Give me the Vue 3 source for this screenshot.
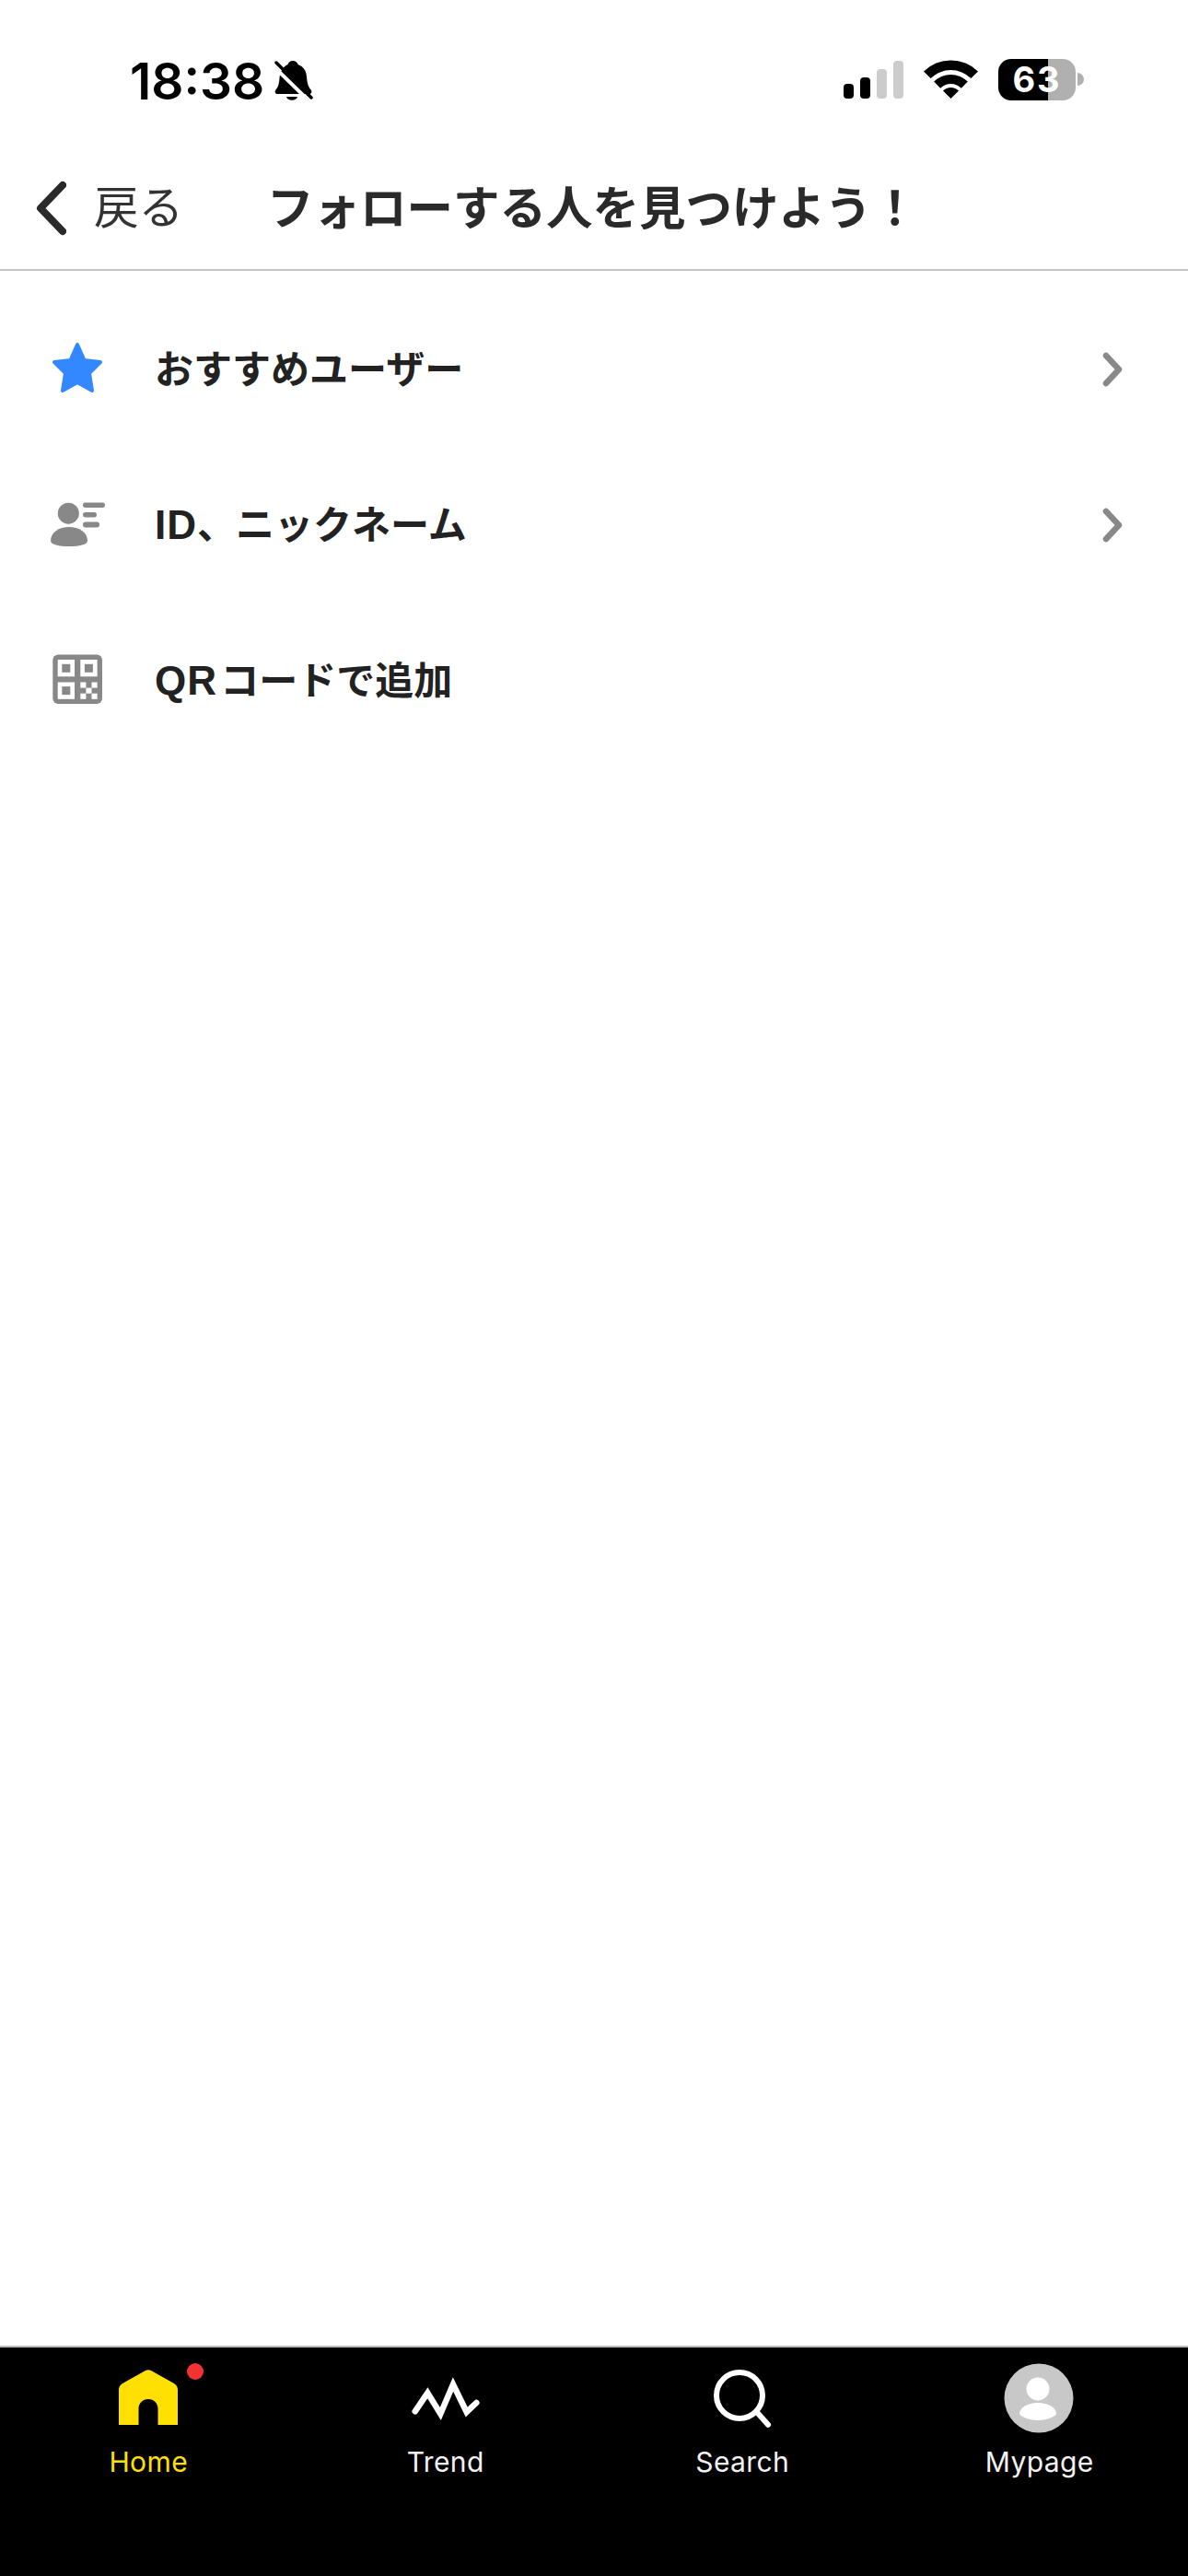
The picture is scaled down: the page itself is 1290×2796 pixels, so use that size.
<script setup>
const tabs = [
  { key: 'home', label: 'Home', active: true },
  { key: 'trend', label: 'Trend' },
  { key: 'search', label: 'Search' },
  { key: 'mypage', label: 'Mypage' }
];

const rows = [
  { key: 'star', latin: '', label: 'おすすめユーザー', arrow: true },
  { key: 'person', latin: 'ID', label: '、ニックネーム', arrow: true },
  { key: 'qr', latin: 'QR', label: ' コードで追加', arrow: false }
];

// QRの右下の市松模様
const checker = [
  [0, 0], [2, 0], [1, 1], [0, 2], [2, 2]
];
</script>

<template>
  <div class="screen">
    <div class="status-bar">
      <div class="status-left">
        <span class="time">18:38</span>
        <svg class="bell" width="42" height="46" viewBox="0 0 42 46">
          <path d="M20 1c3 0 5 2 5.500 4 6 2 9 7 9.500 13 .5 7 1.500 11 5 15 1 2 0 4-2 4H3c-2 0-3-2-2-4 3-3 4-7 4.500-13 .5-7 4-13 9-15C15 3 17 1 20 1z" fill="#000" />
          <path d="M13 40h12c-1 5-11 5-12 0z" fill="#000" />
          <path d="M-2 6 38 45" stroke="#fff" stroke-width="4" />
          <path d="M2 3 40 41" stroke="#000" stroke-width="3.500" stroke-linecap="round" />
        </svg>
      </div>
      <div class="status-right">
        <div class="signal">
          <i class="bar on b1"></i>
          <i class="bar on b2"></i>
          <i class="bar b3"></i>
          <i class="bar b4"></i>
        </div>
        <svg class="wifi" width="59" height="42" viewBox="0 0 59 42">
          <path d="M0 12.500A42 42 0 0 1 59 12.500L51.400 20.100A31 31 0 0 0 7.600 20.100z" fill="#000" />
          <path d="M11.100 23.600A26 26 0 0 1 47.900 23.600L40.800 30.700A16 16 0 0 0 18.200 30.700z" fill="#000" />
          <path d="M21 33.500A12 12 0 0 1 38 33.500L29.500 42z" fill="#000" />
        </svg>
        <div class="battery">63</div>
        <div class="battery-cap"></div>
      </div>
    </div>

    <header class="nav">
      <div class="back">
        <svg width="35" height="60" viewBox="0 0 35 60">
          <path d="M31 5 7 30l24 25" fill="none" stroke="#2a2a2a" stroke-width="8" stroke-linecap="round" stroke-linejoin="round" />
        </svg>
        <span>戻る</span>
      </div>
      <h1>フォローする人を見つけよう！</h1>
    </header>

    <ul class="menu">
      <li v-for="row in rows" :key="row.key" class="menu-row">
        <svg v-if="row.key === 'star'" class="menu-icon" width="57" height="57" viewBox="0 0 57 57">
          <path d="M29 2 36.500 19 54 21 42 33 45 52 29 43 13 52 16 33 4 21 21.500 19z" fill="#3388ff" stroke="#3388ff" stroke-width="4" stroke-linejoin="round" />
        </svg>
        <svg v-else-if="row.key === 'person'" class="menu-icon" width="57" height="57" viewBox="0 0 57 57">
          <circle cx="19.300" cy="16.200" r="11.500" fill="#888" />
          <path d="M0 46C0 37 9 31 20 31s20 6 20 15c0 4-9 6-20 6S0 50 0 46z" fill="#888" />
          <rect x="35" y="4.500" width="24" height="5.500" rx="2.750" fill="#888" />
          <rect x="35" y="15" width="15" height="5.500" rx="2.750" fill="#888" />
          <rect x="35" y="25.500" width="18" height="6" rx="3" fill="#888" />
        </svg>
        <svg v-else class="menu-icon" width="57" height="57" viewBox="0 0 57 57">
          <rect x="2.300" y="0.500" width="53.700" height="53.500" rx="6" fill="#888" />
          <rect x="7.700" y="6" width="18.300" height="18.300" fill="#fff" />
          <rect x="32.300" y="6" width="18.300" height="18.300" fill="#fff" />
          <rect x="7.700" y="30.500" width="18.300" height="18.300" fill="#fff" />
          <rect x="12.300" y="10.800" width="9" height="9" fill="#888" />
          <rect x="36.900" y="10.800" width="9" height="9" fill="#888" />
          <rect x="12.300" y="35.100" width="9" height="9" fill="#888" />
          <rect
            v-for="c in checker"
            :key="c.join('-')"
            :x="32.300 + c[0] * 6.100"
            :y="30.500 + c[1] * 6.100"
            width="6.100"
            height="6.100"
            fill="#fff"
          />
        </svg>
        <span class="menu-label"><span class="latin">{{ row.latin }}</span>{{ row.label }}</span>
        <svg v-if="row.arrow" class="arrow" width="22" height="38" viewBox="0 0 22 38">
          <path d="M4 4 18 19 4 34" fill="none" stroke="#888" stroke-width="6.500" stroke-linecap="round" stroke-linejoin="round" />
        </svg>
      </li>
    </ul>

    <nav class="tabbar">
      <div v-for="tab in tabs" :key="tab.key" class="tab" :class="{ active: tab.active }">
        <div class="tab-icon">
          <svg v-if="tab.key === 'home'" width="80" height="80" viewBox="0 0 80 80">
            <path d="M8 67V29c0-3 1-5 4-7L37 8c2-1 4-1 6 0l25 14c3 2 4 4 4 7v38H50.500V49.500c0-6-4.500-10.500-10.500-10.500s-10.500 4.500-10.500 10.500V67z" fill="#ffe000" />
          </svg>
          <svg v-else-if="tab.key === 'trend'" width="80" height="80" viewBox="0 0 80 80">
            <path d="M6.700 52.300 20.300 32.300 34.300 55 48 23 62.700 53 73.300 43" fill="none" stroke="#fff" stroke-width="6.500" stroke-linecap="round" />
          </svg>
          <svg v-else-if="tab.key === 'search'" width="80" height="80" viewBox="0 0 80 80">
            <circle cx="37" cy="35" r="25" fill="none" stroke="#fff" stroke-width="6" />
            <path d="M55.700 53 68 66.700" stroke="#fff" stroke-width="6" stroke-linecap="round" />
          </svg>
          <svg v-else width="80" height="80" viewBox="0 0 80 80">
            <circle cx="39" cy="38" r="37.500" fill="#c8c8c8" />
            <circle cx="38" cy="28" r="12.500" fill="#fff" />
            <path d="M18 55c0-7 9-12 20-12s20 5 20 12c0 2-9 7-20 7s-20-5-20-7z" fill="#fff" />
          </svg>
          <i v-if="tab.key === 'home'" class="badge"></i>
        </div>
        <span class="tab-label">{{ tab.label }}</span>
      </div>
    </nav>
  </div>
</template>

<style>
html,
body {
  margin: 0;
  background: #fff;
}
</style>

<style scoped>
.screen {
  width: 1290px;
  height: 2796px;
  display: flex;
  flex-direction: column;
  background: #fff;
  font-family: Inter, "Noto Sans CJK JP", sans-serif;
  overflow: hidden;
}

.status-bar {
  height: 172px;
  box-sizing: border-box;
  padding: 64px 113px 0 141px;
  display: flex;
  justify-content: space-between;
  align-items: flex-start;
  flex-shrink: 0;
}

.status-left {
  display: flex;
  align-items: flex-start;
  gap: 11px;
}

.time {
  font-size: 55px;
  line-height: 48px;
  font-weight: 600;
  color: #000;
}

.bell {
  margin-top: 1px;
}

.status-right {
  display: flex;
  align-items: flex-start;
}

.signal {
  display: flex;
  align-items: flex-end;
  gap: 7px;
  height: 41px;
  margin-top: 2px;
  margin-right: 22px;
}

.bar {
  display: block;
  width: 11px;
  border-radius: 4px;
  background: #ccc;
}

.bar.on {
  background: #000;
}

.b1 {
  height: 16px;
}

.b2 {
  height: 23px;
}

.b3 {
  height: 32px;
}

.b4 {
  height: 41px;
}

.wifi {
  margin-top: 1px;
  margin-right: 22px;
}

.battery {
  width: 84px;
  height: 45px;
  border-radius: 14px;
  background: linear-gradient(90deg, #000 54px, #b0b0b0 54px);
  color: #fff;
  font-size: 38px;
  font-weight: 700;
  line-height: 45px;
  letter-spacing: 2px;
  text-align: center;
}

.battery-cap {
  width: 7px;
  height: 14px;
  margin: 15px 0 0 2px;
  border-radius: 0 7px 7px 0;
  background: #b0b0b0;
}

.nav {
  height: 122px;
  flex-shrink: 0;
  box-sizing: border-box;
  border-bottom: 2px solid #c4c4c4;
  padding: 0 0 20px 37px;
  display: flex;
  align-items: center;
}

.back {
  display: flex;
  align-items: center;
  gap: 30px;
  width: 253px;
  color: #333;
  font-size: 48.500px;
}

.back svg {
  margin-top: 8px;
}

.nav h1 {
  margin: 0;
  font-size: 50.500px;
  font-weight: 700;
  color: #2a2a2a;
  white-space: nowrap;
}

.menu {
  list-style: none;
  margin: 0;
  padding: 22px 71px 0 55px;
  flex: 1;
}

.menu-row {
  height: 169px;
  display: flex;
  align-items: center;
}

.menu-icon {
  flex-shrink: 0;
  overflow: visible;
}

.menu-label {
  flex: 1;
  margin-left: 56px;
  padding-bottom: 6px;
  font-family: "Liberation Sans", "Noto Sans CJK JP", sans-serif;
  font-size: 42px;
  font-weight: 700;
  color: #222;
  word-spacing: -8.500px;
  white-space: pre;
}

.latin {
  font-size: 44px;
  letter-spacing: 1px;
}

.tabbar {
  height: 250px;
  flex-shrink: 0;
  box-sizing: border-box;
  border-top: 2px solid #bbb;
  background: #000;
  padding-top: 17px;
  display: grid;
  grid-template-columns: repeat(4, 1fr);
}

.tab {
  display: flex;
  flex-direction: column;
  align-items: center;
  color: #f2f2f2;
}

.tab.active {
  color: #ffe000;
}

.tab-icon {
  position: relative;
  width: 80px;
  height: 80px;
  margin-bottom: 7px;
}

.tab-icon svg {
  display: block;
}

.badge {
  position: absolute;
  left: 82px;
  top: 0;
  width: 18px;
  height: 18px;
  border-radius: 50%;
  background: #f33333;
}

.tab-label {
  font-size: 30px;
  line-height: 40px;
  letter-spacing: 0.4px;
}
</style>
